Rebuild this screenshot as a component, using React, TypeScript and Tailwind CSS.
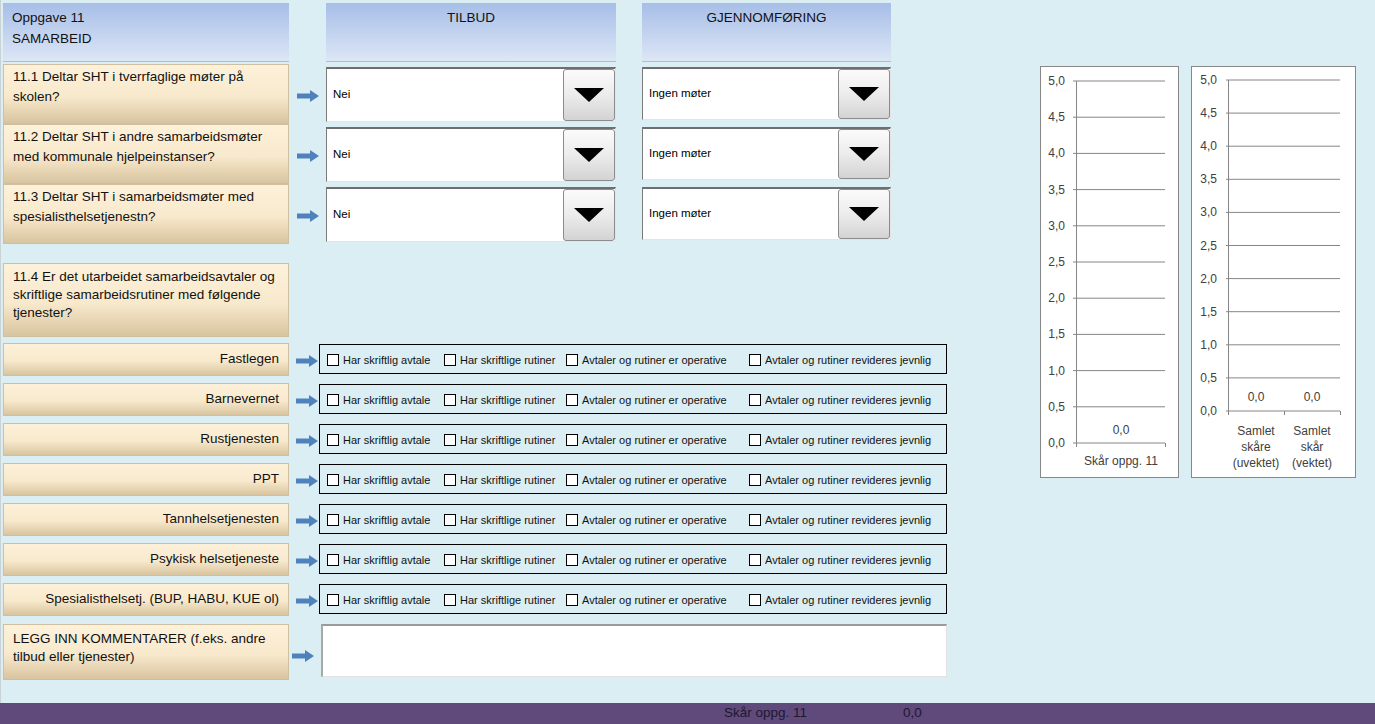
const font = { fontFamily: '"Liberation Sans", Arial, sans-serif' };

function Arrow() {
  return (
    <svg width="22" height="12" viewBox="0 0 22 12">
      <path d="M0 3.5h13V0l9 6-9 6V8.5H0z" fill="#4f81bd" />
    </svg>
  );
}

function Dropdown({ value, width, h }: { value: string; width: string; h: string }) {
  return (
    <div className={`${width} ${h} flex items-center bg-white border-t-2 border-l border-t-[#6f6f6f] border-l-[#7a7a7a] border-r border-b border-r-[#e4e4e4] border-b-[#e4e4e4]`}>
      <span className="flex-1 pl-[6px] text-[11.5px] text-black">{value}</span>
      <div className="w-[52px] h-full flex items-center justify-center rounded-[3px] border border-[#8c8c8c] bg-linear-to-b from-[#fbfbfb] via-[#ececec] to-[#d3d3d3]">
        <svg width="30" height="14" viewBox="0 0 30 14">
          <path d="M0 0h30L15 14z" fill="#000" />
        </svg>
      </div>
    </div>
  );
}

const labelBox =
  'w-[286px] border border-[#cdbf9f] bg-linear-to-b from-[#fdf1da] via-[#f8e9cc] via-55% to-[#d8c49f] text-[13.5px] text-[#111]';

function QuestionRow({ text, tilbud, gjen }: { text: React.ReactNode; tilbud: string; gjen: string }) {
  return (
    <div className="flex h-[60px]">
      <div className={`${labelBox} h-[60px] pt-[2px] pl-[9px] leading-[20px]`}>{text}</div>
      <div className="w-[37px] flex items-center pl-[8px] pt-[4px]">
        <Arrow />
      </div>
      <div className="pt-[3px]">
        <Dropdown value={tilbud} width="w-[290px]" h="h-[55px]" />
      </div>
      <div className="w-[26px]" />
      <div className="pt-[3px]">
        <Dropdown value={gjen} width="w-[249px]" h="h-[53px]" />
      </div>
    </div>
  );
}

function Check({ label, w }: { label: string; w: string }) {
  return (
    <div className={`${w} flex items-center gap-[4px] shrink-0`}>
      <span className="w-[12px] h-[12px] border border-black bg-white shrink-0" />
      <span className="text-[11px] text-[#111] whitespace-nowrap">{label}</span>
    </div>
  );
}

function ServiceRow({ name }: { name: string }) {
  return (
    <div className="flex h-[33px] mb-[7px]">
      <div className={`${labelBox} h-[33px] flex items-center justify-end pr-[9px]`}>{name}</div>
      <div className="w-[30px] flex items-center pl-[7px] pt-[2px]">
        <Arrow />
      </div>
      <div className="w-[628px] h-[30px] mt-[1px] border border-black flex items-center pl-[7px] pt-[2px]">
        <Check label="Har skriftlig avtale" w="w-[117px]" />
        <Check label="Har skriftlige rutiner" w="w-[122px]" />
        <Check label="Avtaler og rutiner er operative" w="w-[183px]" />
        <Check label="Avtaler og rutiner revideres jevnlig" w="w-auto" />
      </div>
    </div>
  );
}

function ChartOne() {
  const ticks = [5, 4.5, 4, 3.5, 3, 2.5, 2, 1.5, 1, 0.5, 0];
  return (
    <div className="w-[139px] h-[412px] bg-white border border-[#878787]">
      <svg width="137" height="410" viewBox="0 0 137 410" style={{ fontFamily: '"Liberation Sans", Arial, sans-serif' }}>
        {ticks.map((t, i) => {
          const y = 14 + i * 36.2;
          return (
            <g key={t}>
              <line x1="32" x2="124" y1={y} y2={y} stroke="#868686" strokeWidth="1" />
              <text x="24" y={y + 4} textAnchor="end" fontSize="12" fill="#404040">
                {t.toFixed(1).replace('.', ',')}
              </text>
            </g>
          );
        })}
        <line x1="35.5" x2="35.5" y1="14" y2="380" stroke="#868686" />
        <line x1="124.5" x2="124.5" y1="376" y2="380" stroke="#868686" />
        <text x="80" y="367" textAnchor="middle" fontSize="12" fill="#404040">0,0</text>
        <text x="80" y="398" textAnchor="middle" fontSize="12" fill="#404040">Skår oppg. 11</text>
      </svg>
    </div>
  );
}

function ChartTwo() {
  const ticks = [5, 4.5, 4, 3.5, 3, 2.5, 2, 1.5, 1, 0.5, 0];
  return (
    <div className="w-[165px] h-[412px] bg-white border border-[#878787]">
      <svg width="163" height="410" viewBox="0 0 163 410" style={{ fontFamily: '"Liberation Sans", Arial, sans-serif' }}>
        {ticks.map((t, i) => {
          const y = 13 + i * 33.1;
          return (
            <g key={t}>
              <line x1="34" x2="148" y1={y} y2={y} stroke="#868686" strokeWidth="1" />
              <text x="25" y={y + 4} textAnchor="end" fontSize="12" fill="#404040">
                {t.toFixed(1).replace('.', ',')}
              </text>
            </g>
          );
        })}
        <line x1="36.5" x2="36.5" y1="13" y2="348" stroke="#868686" />
        <line x1="92.5" x2="92.5" y1="344" y2="348" stroke="#868686" />
        <line x1="148.5" x2="148.5" y1="344" y2="348" stroke="#868686" />
        <text x="64" y="334" textAnchor="middle" fontSize="12" fill="#404040">0,0</text>
        <text x="120" y="334" textAnchor="middle" fontSize="12" fill="#404040">0,0</text>
        <g fontSize="12" fill="#404040" textAnchor="middle">
          <text x="64" y="368">Samlet</text>
          <text x="64" y="384">skåre</text>
          <text x="64" y="400">(uvektet)</text>
          <text x="120" y="368">Samlet</text>
          <text x="120" y="384">skår</text>
          <text x="120" y="400">(vektet)</text>
        </g>
      </svg>
    </div>
  );
}

export default function App() {
  const services = [
    'Fastlegen',
    'Barnevernet',
    'Rustjenesten',
    'PPT',
    'Tannhelsetjenesten',
    'Psykisk helsetjeneste',
    'Spesialisthelsetj. (BUP, HABU, KUE ol)',
  ];
  return (
    <div className="w-[1375px] h-[724px] flex flex-col bg-[#daeef3] overflow-hidden" style={font}>
      <div className="flex-1 flex pl-[2px] pt-[3px] border-l border-l-[#c9d3d6]">
        {/* Left form column */}
        <div className="w-[950px] flex flex-col">
          {/* Header */}
          <div className="flex h-[59px]">
            <div className="w-[286px] h-[59px] bg-linear-to-b from-[#a7bee7] to-[#dde6f5] border-b border-[#b4bccb] pl-[9px] pt-[4px] text-[13.5px] leading-[21px] text-[#111]">
              <div>Oppgave 11</div>
              <div>SAMARBEID</div>
            </div>
            <div className="w-[37px]" />
            <div className="w-[290px] h-[59px] bg-linear-to-b from-[#a7bee7] to-[#dde6f5] border-b border-[#b4bccb] text-center pt-[5px] text-[13.5px] text-[#111]">
              TILBUD
            </div>
            <div className="w-[26px]" />
            <div className="w-[249px] h-[59px] bg-linear-to-b from-[#a7bee7] to-[#dde6f5] border-b border-[#b4bccb] text-center pt-[5px] text-[13.5px] text-[#111]">
              GJENNOMFØRING
            </div>
          </div>

          {/* Questions with dropdowns */}
          <div className="mt-[2px] flex flex-col">
            <QuestionRow text={<>11.1 Deltar SHT i tverrfaglige møter på<br />skolen?</>} tilbud="Nei" gjen="Ingen møter" />
            <QuestionRow text={<>11.2 Deltar SHT i andre samarbeidsmøter<br />med kommunale hjelpeinstanser?</>} tilbud="Nei" gjen="Ingen møter" />
            <QuestionRow text={<>11.3 Deltar SHT i samarbeidsmøter med<br />spesialisthelsetjenestn?</>} tilbud="Nei" gjen="Ingen møter" />
          </div>

          {/* 11.4 */}
          <div className={`${labelBox} mt-[19px] h-[74px] pl-[9px] pt-[4px] leading-[18px]`}>
            11.4 Er det utarbeidet samarbeidsavtaler og
            <br />
            skriftlige samarbeidsrutiner med følgende
            <br />
            tjenester?
          </div>

          <div className="mt-[6px] flex flex-col">
            {services.map((s) => (
              <ServiceRow key={s} name={s} />
            ))}
          </div>

          {/* Comments */}
          <div className="flex mt-[1px]">
            <div className={`${labelBox} h-[56px] pl-[9px] pt-[5px] leading-[18px]`}>
              LEGG INN KOMMENTARER (f.eks. andre
              <br />
              tilbud eller tjenester)
            </div>
            <div className="w-[32px] flex items-center pl-[3px] pt-[8px]">
              <Arrow />
            </div>
            <div className="w-[626px] h-[53px] bg-white border-t-2 border-l-2 border-t-[#9a9a9a] border-l-[#a8a8a8] border-r border-b border-r-[#e2e2e2] border-b-[#e2e2e2]" />
          </div>
        </div>

        {/* Charts */}
        <div className="flex gap-[12px] ml-[87px] mt-[63px] items-start">
          <ChartOne />
          <ChartTwo />
        </div>
      </div>

      {/* Footer */}
      <div className="h-[21px] bg-[#5f4a7b] flex items-center text-[13.5px] text-[#1d1830]">
        <span className="ml-[724px]">Skår oppg. 11</span>
        <span className="ml-[96px]">0,0</span>
      </div>
    </div>
  );
}
